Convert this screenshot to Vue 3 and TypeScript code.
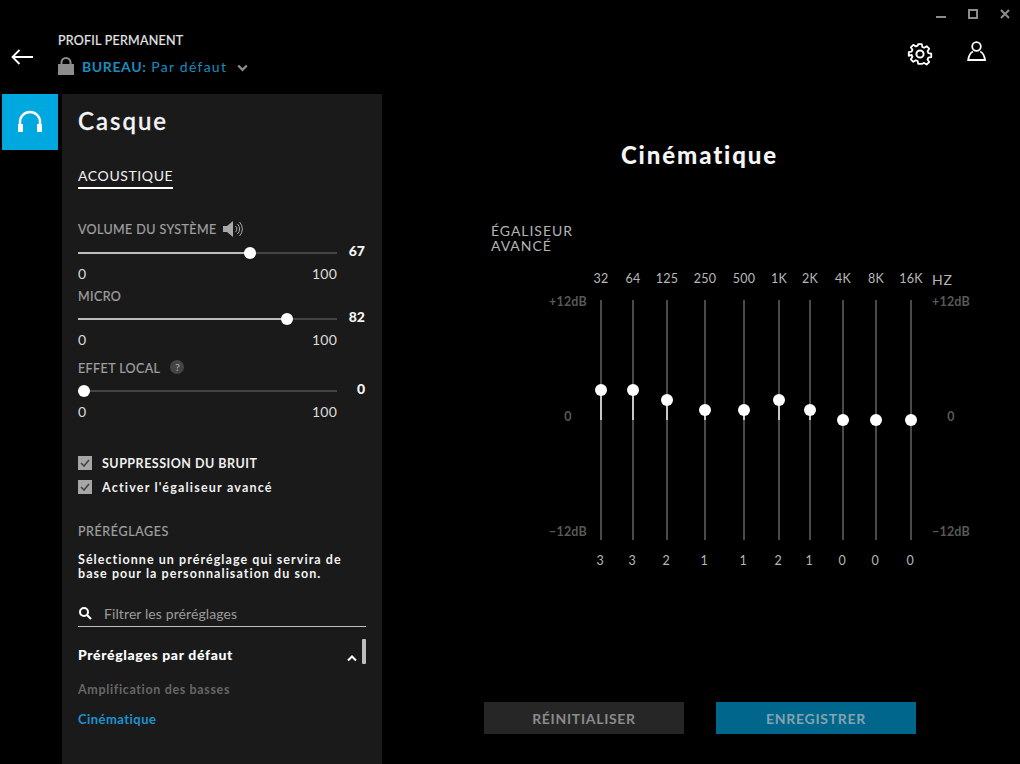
<script setup lang="ts">
interface Band { label: string; value: number; width: number }
interface Slider { label: string; value: number; thumb: number }
const bands: Band[] = [
  { label: '32', value: 3, width: 32 }, { label: '64', value: 3, width: 32 },
  { label: '125', value: 2, width: 36 }, { label: '250', value: 1, width: 40 },
  { label: '500', value: 1, width: 38 }, { label: '1K', value: 2, width: 32 },
  { label: '2K', value: 1, width: 30 }, { label: '4K', value: 0, width: 36 },
  { label: '8K', value: 0, width: 30 }, { label: '16K', value: 0, width: 40 },
]
const sliders: Slider[] = [
  { label: 'VOLUME DU SYSTÈME', value: 67, thumb: 172 },
  { label: 'MICRO', value: 82, thumb: 209 },
  { label: 'EFFET LOCAL', value: 0, thumb: 6 },
]
</script>

<template>
  <div class="app">
    <div class="win">
      <span class="min"></span>
      <span class="max"></span>
      <svg class="close" width="10" height="10" viewBox="0 0 10 10"><path d="M1 1l8 8M9 1l-8 8" stroke="#8c8c8c" stroke-width="2" fill="none"/></svg>
    </div>
    <header class="head">
      <svg class="back" width="22" height="16" viewBox="0 0 22 16"><path d="M22 8H1.5M8.5 1L1.5 8l7 7" stroke="#fff" stroke-width="1.8" fill="none"/></svg>
      <div class="profile">
        <div class="perm">PROFIL PERMANENT</div>
        <div class="desk">
          <svg width="16" height="18" viewBox="0 0 16 18"><path d="M3.5 8V5.5a4.500 4.500 0 0 1 9 0V8" stroke="#8c8c8c" stroke-width="2" fill="none"/><rect y="7" width="16" height="11" fill="#8c8c8c"/></svg>
          <span class="bureau">BUREAU:</span>
          <span class="def">Par défaut</span>
          <svg class="chev" width="11" height="8" viewBox="0 0 11 8"><path d="M1.2 1.5l4.300 4.300 4.300-4.300" stroke="#8c8c8c" stroke-width="2.4" fill="none"/></svg>
        </div>
      </div>
      <div class="tools">
        <svg width="26" height="26" viewBox="0 0 26 26" fill="none" stroke="#fff" stroke-width="2">
          <path d="M11 2h4l.6 3.200 2 .9 2.800-1.800 2.800 2.800-1.800 2.800.9 2 3.200.6v4l-3.200.6-.9 2 1.800 2.800-2.800 2.800-2.800-1.800-2 .9L15 24h-4l-.6-3.200-2-.9-2.800 1.800-2.800-2.800 1.800-2.800-.9-2L0.500 15v-4l3.200-.6.9-2-1.800-2.800 2.800-2.800 2.800 1.800 2-.9z" stroke-linejoin="round" transform="translate(1.300 1.300) scale(.9)"/>
          <circle cx="13" cy="13" r="3.6"/>
        </svg>
        <svg class="user" width="20" height="20" viewBox="0 0 20 20" fill="none" stroke="#fff" stroke-width="1.8">
          <circle cx="9.500" cy="5.500" r="4.300"/>
          <path d="M6 10.500C3.500 11.500 1.800 15 1.200 19h16.800c-.6-4-2.300-7.500-4.800-8.500"/>
        </svg>
      </div>
    </header>

    <div class="main">
      <nav class="rail">
        <div class="tab">
          <svg width="26" height="24" viewBox="0 0 26 24" fill="none">
            <path d="M3 17V12a10 10 0 0 1 20 0v5" stroke="#fff" stroke-width="2.400"/>
            <rect x="1" y="14" width="5" height="8" fill="#fff"/>
            <rect x="20" y="14" width="5" height="8" fill="#fff"/>
          </svg>
        </div>
      </nav>

      <aside class="panel">
        <h1 class="title">Casque</h1>
        <div class="subtab">ACOUSTIQUE</div>

        <div class="sliders">
          <div v-for="s in sliders" :key="s.label" class="slider">
            <div class="s-label">
              <span>{{ s.label }}</span>
              <svg v-if="s.value === 67" width="21" height="16" viewBox="0 0 21 16" fill="none">
                <path d="M0 5h4l6-5v16l-6-5H0z" fill="#a8a8a8"/>
                <path d="M12.500 5a4 4 0 0 1 0 6M14.500 3a7 7 0 0 1 0 10M16.500 1a10 10 0 0 1 0 14" stroke="#a8a8a8" stroke-width="1"/>
              </svg>
              <span v-if="s.value === 0" class="help">?</span>
            </div>
            <div class="s-row">
              <div class="track">
                <div class="fill" :style="{ width: s.thumb + 'px' }"></div>
                <div class="thumb" :style="{ left: s.thumb - 6 + 'px' }"></div>
              </div>
              <div class="s-val">{{ s.value }}</div>
            </div>
            <div class="s-range"><span>0</span><span>100</span></div>
          </div>
        </div>

        <label class="check first">
          <span class="box"><svg width="10" height="8" viewBox="0 0 10 8"><path d="M1 4l3 3 5-6" stroke="#444" stroke-width="1.600" fill="none"/></svg></span>
          <span>SUPPRESSION DU BRUIT</span>
        </label>
        <label class="check second">
          <span class="box"><svg width="10" height="8" viewBox="0 0 10 8"><path d="M1 4l3 3 5-6" stroke="#444" stroke-width="1.600" fill="none"/></svg></span>
          <span>Activer l'égaliseur avancé</span>
        </label>

        <div class="pre">PRÉRÉGLAGES</div>
        <p class="desc">Sélectionne un préréglage qui servira de<br>base pour la personnalisation du son.</p>

        <div class="search">
          <svg width="14" height="14" viewBox="0 0 14 14" fill="none" stroke="#fff"><circle cx="6" cy="6" r="4" stroke-width="2"/><path d="M9 9l4 4" stroke-width="2.200"/></svg>
          <span>Filtrer les préréglages</span>
        </div>

        <div class="group">
          <span>Préréglages par défaut</span>
          <svg width="10" height="7" viewBox="0 0 10 7"><path d="M1 5.500l4-4 4 4" stroke="#fff" stroke-width="2" fill="none"/></svg>
          <i class="scroll"></i>
        </div>
        <div class="item">Amplification des basses</div>
        <div class="item active">Cinématique</div>
      </aside>

      <section class="content">
        <h2 class="name">Cinématique</h2>
        <div class="eq-title">ÉGALISEUR<br>AVANCÉ</div>

        <div class="eq">
          <div class="scale left">
            <span>+12dB</span><span>0</span><span>−12dB</span>
          </div>
          <div class="bands">
            <div v-for="b in bands" :key="b.label" class="band" :style="{ width: b.width + 'px' }">
              <div class="freq">{{ b.label }}</div>
              <div class="rail-v">
                <div class="lit" :style="{ height: b.value * 10 + 'px' }"></div>
                <div class="knob" :style="{ top: 114 - b.value * 10 + 'px' }"></div>
              </div>
              <div class="num">{{ b.value }}</div>
            </div>
          </div>
          <div class="right-col">
            <div class="hz">HZ</div>
            <div class="scale right">
              <span>+12dB</span><span>0</span><span>−12dB</span>
            </div>
          </div>
        </div>

        <div class="actions">
          <button class="btn reset">RÉINITIALISER</button>
          <button class="btn save">ENREGISTRER</button>
        </div>
      </section>
    </div>
  </div>
</template>

<style>
html, body { margin: 0; background: #000; }
</style>

<style scoped>
.app { width: 1020px; height: 764px; background: #000; color: #fff; font-family: Lato, "Noto Sans", sans-serif; position: relative; overflow: hidden; }
.win { position: absolute; top: 9px; right: 10px; display: flex; align-items: flex-start; gap: 22px; }
.min { width: 10px; height: 2px; background: #8c8c8c; margin-top: 7px; }
.max { width: 6px; height: 6px; border: 2px solid #8c8c8c; }
.close { display: block; }
.head { height: 94px; display: flex; box-sizing: border-box; position: relative; }
.back { margin: 49px 0 0 11px; flex: none; }
.profile { margin: 33px 0 0 25px; }
.perm { font-size: 12.5px; line-height: 16px; color: #e6e6e6; letter-spacing: .25px; -webkit-text-stroke: .2px #e6e6e6; }
.desk { display: flex; align-items: center; margin-top: 8px; height: 18px; }
.bureau { margin-left: 8px; font-size: 14px; font-weight: 700; color: #1a8cbf; letter-spacing: .6px; }
.def { margin-left: 5px; font-size: 14px; color: #1a8cbf; letter-spacing: 1.25px; }
.chev { margin: 4px 0 0 10px; }
.tools { margin-left: auto; display: flex; align-items: flex-start; padding: 41px 33px 0 0; gap: 34px; }
.main { display: flex; height: 670px; }
.rail { width: 62px; flex: none; padding-left: 2px; box-sizing: border-box; }
.tab { width: 56px; height: 56px; background: #00a8e0; display: flex; align-items: center; justify-content: center; }
.panel { width: 320px; flex: none; background: #1a1a1a; box-sizing: border-box; padding: 0 16px; position: relative; }
.title { margin: 12px 0 0; font-size: 24px; line-height: 30px; font-weight: 500; letter-spacing: 2px; color: #f5f5f5; -webkit-text-stroke: .35px #f5f5f5; }
.subtab { margin-top: 31px; width: 95px; font-size: 14px; line-height: 18px; padding-bottom: 2px; border-bottom: 2px solid #fff; color: #f0f0f0; white-space: nowrap; box-sizing: border-box; letter-spacing: .6px; }
.sliders { margin-top: 31px; }
.slider { height: 68px; }
.slider:nth-child(1) { height: 67px; }
.slider:nth-child(2) { height: 72px; }
.s-label { height: 18px; display: flex; align-items: center; gap: 6px; font-size: 12.5px; letter-spacing: .4px; color: #a0a0a0; -webkit-text-stroke: .2px #a0a0a0; }
.help { width: 14px; height: 14px; border-radius: 50%; background: #444; color: #aaa; font-size: 10px; display: flex; align-items: center; justify-content: center; margin-left: 4px; letter-spacing: 0; margin-top: -3px; }
.s-row { display: flex; height: 18px; align-items: center; margin-top: 4px; position: relative; }
.slider:nth-child(1) .s-row { margin-top: 5px; }
.track { width: 259px; height: 2px; background: #444; position: relative; margin-top: 2px; }
.fill { height: 2px; background: #bdbdbd; }
.thumb { position: absolute; top: -5px; width: 12px; height: 12px; border-radius: 50%; background: #fff; }
.s-val { margin-left: auto; margin-right: 1px; font-size: 14px; font-weight: 900; color: #f5f5f5; margin-top: -3px; }
.s-range { width: 259px; display: flex; justify-content: space-between; font-size: 14px; line-height: 18px; color: #dcdcdc; margin-top: 4px; letter-spacing: .2px; }
.check { display: flex; align-items: center; gap: 10px; height: 14px; font-size: 12.5px; font-weight: 700; color: #efefef; letter-spacing: .5px; margin-top: 10px; white-space: nowrap; }
.check.first { margin-top: 29px; }
.check.second { letter-spacing: 1.2px; }
.box { width: 14px; height: 14px; background: #a6a6a6; display: flex; align-items: center; justify-content: center; flex: none; }
.pre { margin-top: 30px; font-size: 12.5px; line-height: 16px; letter-spacing: .6px; color: #a0a0a0; -webkit-text-stroke: .2px #a0a0a0; }
.desc { margin: 13px 0 0; font-size: 12.5px; line-height: 14px; font-weight: 700; letter-spacing: 1.05px; color: #f2f2f2; white-space: nowrap; }
.search { margin-top: 19px; height: 26px; display: flex; align-items: center; gap: 12px; border-bottom: 1px solid #bfbfbf; font-size: 14px; letter-spacing: .1px; color: #9a9a9a; }
.group { margin-top: 14px; height: 26px; display: flex; align-items: center; font-size: 14px; font-weight: 900; letter-spacing: .65px; color: #fff; position: relative; }
.group svg { position: absolute; left: 269px; top: 14px; }
.scroll { position: absolute; right: 0; top: -2px; width: 4px; height: 25px; background: #bdbdbd; border-radius: 1px; }
.item { margin-top: 13px; height: 20px; font-size: 12.5px; line-height: 20px; font-weight: 700; color: #666; letter-spacing: .65px; }
.item.active { margin-top: 9px; color: #1a93d0; font-size: 13px; letter-spacing: .45px; }
.content { flex: 1; padding-left: 109px; box-sizing: border-box; position: relative; }
.name { margin: 45px 0 0; width: 417px; text-align: center; font-size: 24px; line-height: 32px; font-weight: 900; letter-spacing: 1.9px; color: #f5f5f5; }
.eq-title { margin-top: 52px; font-size: 14px; line-height: 15px; letter-spacing: .95px; color: #b4b4b4; }
.eq { display: flex; margin-top: 17px; height: 300px; }
.scale { display: flex; flex-direction: column; justify-content: space-between; width: 38px; height: 244px; font-size: 12.5px; font-weight: 700; color: #585858; line-height: 14px; letter-spacing: .2px; text-align: center; flex: none; }
.scale.left { margin: 25px -2px 0 58px; }
.bands { display: flex; }
.band { display: flex; flex-direction: column; align-items: center; flex: none; }
.freq { height: 18px; line-height: 18px; font-size: 12.5px; color: #b8b8b8; letter-spacing: .3px; white-space: nowrap; }
.rail-v { width: 2px; height: 240px; flex: none; background: #4a4a4a; margin-top: 12px; position: relative; }
.lit { position: absolute; left: 0; bottom: 120px; width: 2px; background: #c8c8c8; }
.knob { position: absolute; left: -5px; width: 12px; height: 12px; border-radius: 50%; background: #fff; }
.num { margin-top: 14px; margin-left: -2px; line-height: 14px; font-size: 12.5px; color: #b8b8b8; }
.right-col { width: 40px; margin-left: 1px; }
.hz { font-size: 14px; line-height: 18px; color: #b4b4b4; letter-spacing: .7px; margin-top: 1px; }
.scale.right { margin-top: 6px; }
.actions { position: absolute; left: 102px; top: 608px; display: flex; gap: 32px; }
.btn { width: 200px; height: 32px; border: 0; padding: 0; font: 700 14px Lato, sans-serif; letter-spacing: .7px; }
.reset { background: #262626; color: #8a8a8a; }
.save { background: #00668c; color: #86a3ae; }
</style>
